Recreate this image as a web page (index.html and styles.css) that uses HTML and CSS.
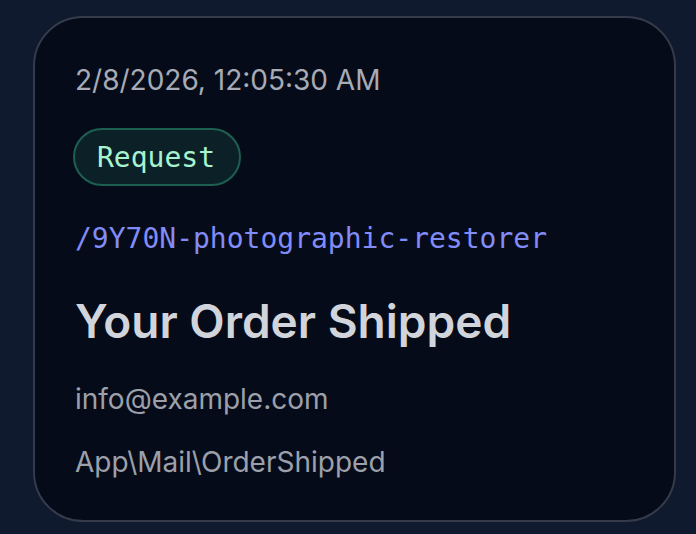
FILE: index.html
```html
<!DOCTYPE html>
<html lang="en">
<head>
<meta charset="utf-8">
<title>Mail</title>
<link rel="stylesheet" href="styles.css">
</head>
<body>
<main class="page">
  <article class="card">
    <div class="date">2/8/2026, 12:05:30 AM</div>
    <div class="badge-row"><span class="badge">Request</span></div>
    <div class="route">/9Y70N-photographic-restorer</div>
    <h1 class="title">Your Order Shipped</h1>
    <div class="meta">info@example.com</div>
    <div class="meta">App\Mail\OrderShipped</div>
  </article>
</main>
</body>
</html>
```
FILE: styles.css
```css
html, body {
  margin: 0;
  padding: 0;
  background: #101a2e;
  height: 100%;
}
body {
  font-family: Inter, "Noto Sans", sans-serif;
}
.page {
  padding: 16px 20px 12px 33px;
}
.card {
  box-sizing: border-box;
  width: 643px;
  height: 506px;
  background: #060b19;
  border: 2px solid #363b4b;
  border-radius: 50px;
  padding: 44px 40px 0 40px;
  display: flex;
  flex-direction: column;
}
.date {
  font-size: 28px;
  line-height: 36px;
  color: #a7abb6;
}
.badge-row {
  margin-top: 30px;
  margin-left: -2px;
  display: flex;
}
.badge {
  box-sizing: border-box;
  height: 58px;
  padding: 0 24px 0 22px;
  border: 2px solid #1d5f50;
  background: #0c2127;
  border-radius: 29px;
  display: flex;
  align-items: center;
  font-family: "DejaVu Sans Mono", monospace;
  font-size: 28px;
  color: #a7f3d0;
}
.route {
  margin-top: 35px;
  font-family: "DejaVu Sans Mono", monospace;
  font-size: 28px;
  line-height: 36px;
  color: #818cf8;
}
.title {
  margin: 37px 0 0 0;
  font-size: 46px;
  line-height: 54px;
  font-weight: 600;
  color: #d1d5db;
}
.meta {
  font-size: 28px;
  line-height: 36px;
  color: #9ca0ab;
  margin-top: 33px;
}
.meta + .meta {
  margin-top: 27px;
}
```
